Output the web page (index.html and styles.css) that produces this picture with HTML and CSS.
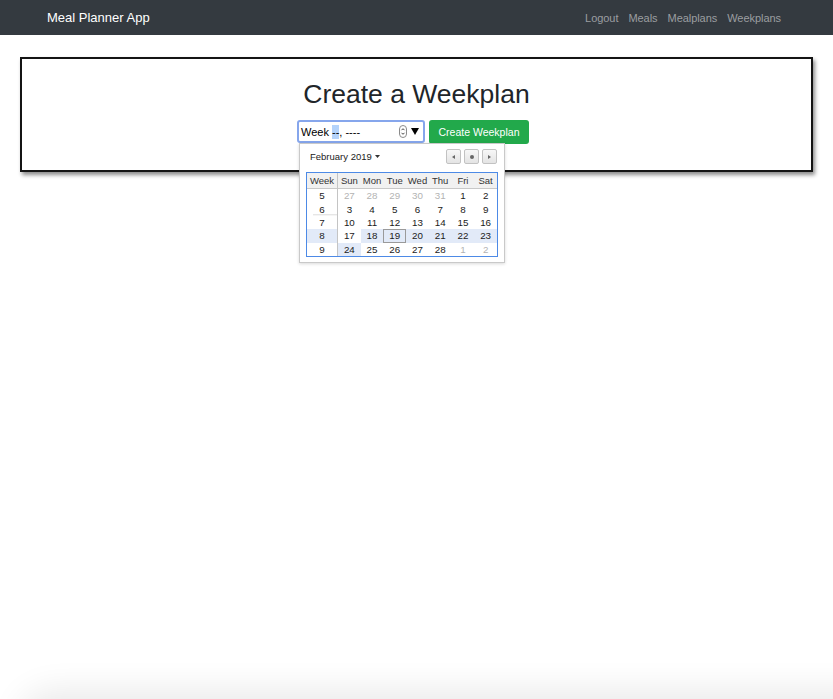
FILE: index.html
```html
<!DOCTYPE html>
<html lang="en">
<head>
<meta charset="utf-8">
<title>Meal Planner App</title>
<link rel="stylesheet" href="styles.css">
</head>
<body>
<nav class="navbar">
  <a class="brand" href="#">Meal Planner App</a>
  <ul class="nav-links">
    <li><a href="#">Logout</a></li>
    <li><a href="#">Meals</a></li>
    <li><a href="#">Mealplans</a></li>
    <li><a href="#">Weekplans</a></li>
  </ul>
</nav>
<main class="page">
  <section class="card">
    <h1 class="title">Create a Weekplan</h1>
    <form class="form-row">
      <div class="week-field">
        <div class="week-input">
          <span class="seg">Week&nbsp;</span><span class="sel">--</span><span class="seg">, ----</span>
          <span class="spin"><svg width="8" height="13" viewBox="0 0 8 13"><rect x="0.5" y="0.5" width="7" height="12" rx="3.5" fill="#fff" stroke="#8a8a8a"/><path d="M2.5 5.2 L4 3.7 L5.5 5.2" fill="none" stroke="#333" stroke-width="0.9"/><path d="M2.5 7.8 L4 9.3 L5.5 7.8" fill="none" stroke="#333" stroke-width="0.9"/></svg></span>
          <span class="drop"><svg width="8" height="7" viewBox="0 0 8 7"><polygon points="0,0 8,0 4,7" fill="#000"/></svg></span>
        </div>
        <div class="picker">
          <div class="picker-head">
            <span class="month">February 2019 <svg width="5" height="3" viewBox="0 0 5 3"><polygon points="0,0 5,0 2.5,3" fill="#333"/></svg></span>
            <div class="nav-btns">
              <span class="nbtn"><svg width="3" height="4" viewBox="0 0 3 4"><polygon points="3,0 3,4 0,2" fill="#666"/></svg></span>
              <span class="nbtn"><svg width="4" height="4" viewBox="0 0 4 4"><circle cx="2" cy="2" r="2" fill="#666"/></svg></span>
              <span class="nbtn"><svg width="3" height="4" viewBox="0 0 3 4"><polygon points="0,0 0,4 3,2" fill="#666"/></svg></span>
            </div>
          </div>
          <div class="cal">
            <span class="hd wk">Week</span><span class="hd">Sun</span><span class="hd">Mon</span><span class="hd">Tue</span><span class="hd">Wed</span><span class="hd">Thu</span><span class="hd">Fri</span><span class="hd">Sat</span>

            <span class="wk">5</span><span class="out">27</span><span class="out">28</span><span class="out">29</span><span class="out">30</span><span class="out">31</span><span>1</span><span>2</span>

            <span class="wk wk-sep">6</span><span>3</span><span>4</span><span>5</span><span>6</span><span>7</span><span>8</span><span>9</span>

            <span class="wk">7</span><span>10</span><span>11</span><span>12</span><span>13</span><span>14</span><span>15</span><span>16</span>

            <span class="wk hl">8</span><span>17</span><span class="hl">18</span><span class="hl today">19</span><span class="hl">20</span><span class="hl">21</span><span class="hl">22</span><span class="hl">23</span>

            <span class="wk">9</span><span class="hl">24</span><span>25</span><span>26</span><span>27</span><span>28</span><span class="out">1</span><span class="out">2</span>
          </div>
        </div>
      </div>
      <button class="btn" type="button">Create Weekplan</button>
    </form>
  </section>
</main>
<div class="window-shadow"></div>
</body>
</html>
```

FILE: styles.css
```css
* { box-sizing: border-box; }

html, body {
  height: 100%;
}

body {
  margin: 0;
  padding: 0;
  background: #fff;
  font-family: "Liberation Sans", Arial, Helvetica, sans-serif;
  color: #212529;
  min-height: 699px;
}

.navbar {
  height: 35px;
  background: #343a40;
  display: flex;
  align-items: center;
  justify-content: space-between;
  padding: 0 52px 0 47px;
}

.brand {
  color: #fff;
  font-size: 13px;
  text-decoration: none;
  line-height: 16px;
}

.nav-links {
  list-style: none;
  margin: 0;
  padding: 0;
  display: flex;
  gap: 10px;
  font-size: 11px;
  line-height: 14px;
}

.nav-links a {
  color: #9b9ea1;
  text-decoration: none;
  letter-spacing: -0.05px;
}

.page {
  padding: 22px 20px 0 20px;
}

.card {
  border: 2px solid #141414;
  box-shadow: 2px 3px 4px rgba(0, 0, 0, 0.45);
  padding: 19px 0 26px 0;
  display: flex;
  flex-direction: column;
  align-items: center;
}

.title {
  margin: 0;
  font-size: 26.5px;
  font-weight: normal;
  line-height: 32px;
  color: #212529;
}

.form-row {
  margin: 10px 7px 0 0;
  display: flex;
  align-items: flex-start;
  gap: 4px;
}

.week-field {
  position: relative;
}

.week-input {
  width: 128px;
  height: 23px;
  border: 2px solid #86a6ec;
  border-radius: 3px;
  background: #fff;
  display: flex;
  align-items: center;
  padding: 0 4px 0 2px;
  font-size: 11px;
  color: #000;
}

.seg { white-space: pre; }

.sel {
  background: #b4d3fb;
  padding: 1px 0;
}

.spin {
  margin-left: auto;
  display: flex;
  align-items: center;
}

.drop {
  margin-left: 4px;
  display: flex;
  align-items: center;
}

.btn {
  width: 100px;
  height: 24px;
  border: none;
  border-radius: 3px;
  background: #22a94b;
  color: #fff;
  font-family: "Liberation Sans", Arial, Helvetica, sans-serif;
  font-size: 10.5px;
  padding: 0;
}

.picker {
  position: absolute;
  top: 23px;
  left: 2px;
  width: 206px;
  height: 120px;
  background: #fff;
  border: 1px solid #c9c9c9;
  box-shadow: 0 1px 3px rgba(0, 0, 0, 0.15);
  padding: 5px 6px 5px 6px;
  display: flex;
  flex-direction: column;
}

.picker-head {
  flex: none;
  height: 15px;
  margin-bottom: 8px;
  display: flex;
  align-items: center;
  justify-content: space-between;
  padding-left: 4px;
}

.month {
  font-size: 9.5px;
  color: #222;
  display: flex;
  align-items: center;
  gap: 3px;
}

.nav-btns {
  display: flex;
  gap: 3px;
  margin-right: 1px;
}

.nbtn {
  width: 15px;
  height: 15px;
  border: 1px solid #c2c2c2;
  border-radius: 2px;
  background: linear-gradient(#f7f7f7, #e4e4e4);
  display: flex;
  align-items: center;
  justify-content: center;
}

.cal {
  flex: none;
  width: 192px;
  height: 85px;
  border: 1px solid #4d8ae6;
  display: grid;
  grid-template-columns: 31px repeat(7, 1fr);
  grid-template-rows: 16px repeat(5, 1fr);
  font-size: 9.8px;
  color: #1a1a1a;
  background: #fff;
}

.cal span {
  display: flex;
  align-items: center;
  justify-content: center;
}

.cal .hd {
  background: #f1f1f1;
  border-bottom: 1px solid #c8c8c8;
  color: #333;
  font-size: 9.5px;
}

.cal .wk {
  border-right: 1px solid #c4c4c4;
}

.cal .wk-sep {
  background: linear-gradient(to top, #e6e6e6 1.5px, transparent 1.5px) no-repeat 6px 100% / calc(100% - 6px) 100%;
}

.cal .out { color: #b3b3b3; }

.cal .hl { background: #e2eaf8; }

.cal .today { box-shadow: inset 0 0 0 1px #9a9a9a; }

.window-shadow {
  position: fixed;
  top: 100%;
  left: 28px;
  right: -60px;
  height: 60px;
  border-radius: 24px;
  box-shadow: 0 0 34px 8px rgba(0, 0, 0, 0.09);
  pointer-events: none;
}
```
